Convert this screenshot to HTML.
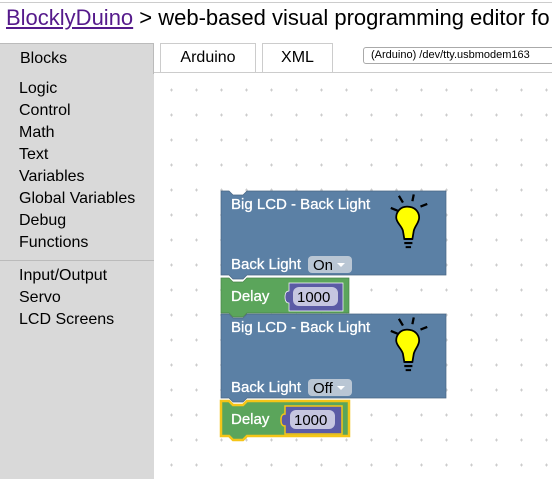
<!DOCTYPE html>
<html><head><style>
*{margin:0;padding:0;box-sizing:border-box}
body{width:552px;height:479px;overflow:hidden;background:#fff;font-family:"Liberation Sans",Arial,sans-serif;position:relative}
.top{position:absolute;left:0;top:2px;width:552px;border-top:1px solid #ccc}
h1{position:absolute;left:6px;top:5px;font-size:22px;font-weight:normal;white-space:nowrap;color:#000}
h1 a{color:#551a8b;text-decoration:underline}
.side{position:absolute;left:0;top:43px;width:154px;height:436px;background:#d9d9d9}
.side .hd{height:31px;border-top:1px solid #bbb;border-right:1px solid #bbb;font-size:16px;padding:6px 0 0 20px}
.side .it{font-size:16px;padding-left:19px;line-height:22px}
.sep{border-top:1px solid #bbb;margin:6px 0 4px}
.tab{position:absolute;top:43px;height:30px;border:1px solid #ccc;border-bottom:none;font-size:16px;text-align:center;padding-top:5px;background:#fff}
.line{position:absolute;left:154px;top:72px;width:398px;border-top:1px solid #ccc}
.sel{position:absolute;left:363px;top:47px;width:200px;height:17px;border:1px solid #aaa;border-radius:3px;font-size:11px;padding:1px 0 0 7px;background:#fff}
svg{position:absolute;left:154px;top:73px}
</style></head><body>
<div class="top"></div>
<h1><a>BlocklyDuino</a> &gt; web-based visual programming editor fo</h1>
<div class="side">
<div class="hd">Blocks</div>
<div style="height:4px"></div>
<div class="it">Logic</div><div class="it">Control</div><div class="it">Math</div><div class="it">Text</div><div class="it">Variables</div><div class="it">Global Variables</div><div class="it">Debug</div><div class="it">Functions</div>
<div class="sep"></div>
<div class="it">Input/Output</div><div class="it">Servo</div><div class="it">LCD Screens</div>
</div>
<div class="tab" style="left:160px;width:96px">Arduino</div>
<div class="tab" style="left:262px;width:71px">XML</div>
<div class="line"></div>
<div class="sel">(Arduino) /dev/tty.usbmodem163</div>
<svg width="398" height="406" viewBox="154 73 398 406" font-family="Liberation Sans,Arial,sans-serif">
<defs><pattern id="g" x="0" y="0" width="25" height="25" patternUnits="userSpaceOnUse"><path d="M20 15h3M21.5 13.5v3" stroke="#ccc" stroke-width="1"/></pattern></defs>
<rect x="154" y="73" width="398" height="406" fill="url(#g)"/>
<g id="b1">
<path d="M221 191h8l4 4h10l4-4h199v84h-199l-4 4h-10l-4-4h-8z" fill="#5b80a5" stroke="#496684" stroke-width="0.7"/>
<text x="231" y="209" fill="#fff" font-size="15" stroke="#fff" stroke-width="0.3">Big LCD - Back Light</text>
<text x="231" y="269" fill="#fff" font-size="15" stroke="#fff" stroke-width="0.3">Back Light</text>
<g transform="translate(407,212) scale(1.35)">
<path d="M0-4c6 0 9 4 9 8c0 4-3 6-4 10l-1 6h-6l-1-6c-1-4-5-6-5-10c0-4 3-8 8-8z" fill="#ff0" stroke="#000" stroke-width="1.3"/>
<path d="M-2 20h6M-2 23h6M-1 26h4" stroke="#000" stroke-width="1.5"/>
<path d="M-12 -3l5 2M-6-12l3 5M5-13l-1 5M15-6l-5 2" stroke="#000" stroke-width="1.7"/>
</g>
</g>
<rect x="308" y="256" width="44" height="17" rx="4" fill="#b9c6d4"/>
<text x="313" y="270" font-size="15">On</text><path d="M337 263h8l-4 4z" fill="#fff"/>
<path d="M221 278h8l4 4h10l4-4h102v35h-102l-4 4h-10l-4-4h-8z" fill="#5ba55b" stroke="#488448" stroke-width="0.7"/>
<text x="231" y="301" fill="#fff" font-size="15" stroke="#fff" stroke-width="0.3">Delay</text>
<path d="M289 283h54v28h-54v-8c-3 0-4-2-4-6s1-6 4-6z" fill="#5b5ba5" stroke="#fff" stroke-width="0.7"/>
<rect x="293" y="287" width="45" height="19" rx="6" fill="#c6c6e0"/>
<text x="297" y="302" font-size="15">1000</text>
<use href="#b1" y="123"/>
<rect x="308" y="379" width="44" height="17" rx="4" fill="#b9c6d4"/>
<text x="313" y="393" font-size="15">Off</text><path d="M337 386h8l-4 4z" fill="#fff"/>
<path d="M221 401h8l4 4h10l4-4h102v35h-102l-4 4h-10l-4-4h-8z" fill="#5ba55b" stroke="#f5c518" stroke-width="2.5"/>
<text x="231" y="424" fill="#fff" font-size="15" stroke="#fff" stroke-width="0.3">Delay</text>
<path d="M285 406h57v28h-57v-8c-3 0-4-2-4-6s1-6 4-6z" fill="#5b5ba5" stroke="#f5c518" stroke-width="1.5"/>
<rect x="290" y="410" width="45" height="19" rx="6" fill="#c6c6e0"/>
<text x="294" y="425" font-size="15">1000</text>
</svg>
</body></html>
